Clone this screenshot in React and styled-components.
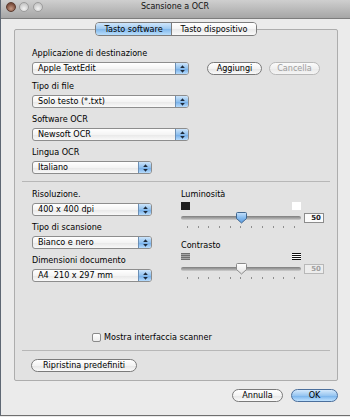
import React from 'react';
import styled, { createGlobalStyle } from 'styled-components';

const GlobalStyle = createGlobalStyle`
  html, body { margin: 0; padding: 0; background: #e9e9e9; }
  body {
    font-family: "DejaVu Sans", "Lucida Grande", sans-serif;
    font-size: 8.1px;
    color: #000;
  }
`;

const Window = styled.div`
  width: 350px;
  height: 416px;
  box-sizing: border-box;
  display: flex;
  flex-direction: column;
  background: #ebebeb;
  border-left: 1px solid #5f6874;
  border-bottom: 1px solid #6e6e6e;
  overflow: hidden;
`;

const TitleBar = styled.div`
  flex: none;
  height: 19px;
  display: grid;
  grid-template-columns: 1fr auto 1fr;
  align-items: start;
  padding: 2px 6px 0 5px;
  box-sizing: border-box;
  background: linear-gradient(#cfcfcf, #a6a6a6);
  border-bottom: 1px solid #7d7d7d;
`;

const Lights = styled.div`
  display: flex;
  gap: 3.3px;
`;

const Light = styled.span`
  width: 10px;
  height: 10px;
  border-radius: 50%;
  box-sizing: border-box;
  border: 1px solid ${p => (p.$close ? '#5a3a2e' : '#9c9c9c')};
  background: ${p =>
    p.$close
      ? 'radial-gradient(circle at 50% 70%, #c79a84, #7a4c3c 70%)'
      : 'radial-gradient(circle at 50% 70%, #f2f2f2, #c6c6c6 75%)'};
`;

const Title = styled.div`
  line-height: 10px;
  font-size: 8px;
  color: #111;
`;

const Body = styled.div`
  flex: 1;
  display: flex;
  flex-direction: column;
  padding: 3px 12px 0 13px;
`;

const TabRow = styled.div`
  display: flex;
  justify-content: center;
  position: relative;
  z-index: 1;
  margin-bottom: -7px;
`;

const Segments = styled.div`
  display: flex;
  height: 14px;
  box-sizing: border-box;
  border: 1px solid #7c7c7c;
  border-radius: 4px;
  overflow: hidden;
`;

const Segment = styled.div`
  width: ${p => p.$w}px;
  display: flex;
  align-items: center;
  justify-content: center;
  line-height: 12px;
  background: ${p =>
    p.$active
      ? 'linear-gradient(#cfe6fb, #9cc8f0 50%, #7fb6ea 51%, #b9defc)'
      : 'linear-gradient(#ffffff, #f4f4f4 50%, #e8e8e8 51%, #fafafa)'};
  & + & { border-left: 1px solid #7c7c7c; }
`;

const GroupBox = styled.div`
  height: 352px;
  box-sizing: border-box;
  display: flex;
  flex-direction: column;
  padding: 18px 7px 8px 7px;
  background: #e2e2e2;
  border: 1px solid #adadad;
  border-radius: 2px;
`;

const TopSection = styled.div`
  display: flex;
  flex-direction: column;
  gap: 6px;
  padding-left: 10px;
`;

const Field = styled.div`
  display: flex;
  flex-direction: column;
  gap: 3px;
`;

const Label = styled.div`
  line-height: 11px;
  height: 11px;
  white-space: nowrap;
  margin-top: ${p => p.$top || 0}px;
`;

const Inline = styled.div`
  display: flex;
  align-items: center;
  gap: ${p => p.$gap || 0}px;
`;

const PopupBox = styled.div`
  width: ${p => p.$w}px;
  height: 13px;
  box-sizing: border-box;
  display: flex;
  align-items: stretch;
  border: 1px solid #8d8d8d;
  border-radius: 3px;
  overflow: hidden;
  background: linear-gradient(#ffffff, #f4f4f4 50%, #e7e7e7 51%, #f9f9f9);
`;

const PopupText = styled.span`
  flex: 1;
  padding-left: 5px;
  line-height: 11px;
  white-space: pre;
`;

const PopupArrows = styled.span`
  width: 12px;
  display: flex;
  align-items: center;
  justify-content: center;
  border-left: 1px solid #6b8fb5;
  background: linear-gradient(#cde5fb, #8fc0ee 50%, #6faae6 51%, #b7dcfd);
`;

const Popup = ({ w, children }) => (
  <PopupBox $w={w}>
    <PopupText>{children}</PopupText>
    <PopupArrows>
      <svg width="5" height="8" viewBox="0 0 5 8">
        <polygon points="2.5,0.3 4.8,3 0.2,3" fill="#1d2a3a" />
        <polygon points="0.2,5 4.8,5 2.5,7.7" fill="#1d2a3a" />
      </svg>
    </PopupArrows>
  </PopupBox>
);

const Button = styled.div`
  width: ${p => p.$w}px;
  height: 13px;
  box-sizing: border-box;
  display: flex;
  align-items: center;
  justify-content: center;
  line-height: 11px;
  border-radius: 7px;
  border: 1px solid ${p => (p.$default ? '#4b6f9c' : p.$disabled ? '#b9b9b9' : '#7a7a7a')};
  color: ${p => (p.$disabled ? '#9c9c9c' : '#000')};
  background: ${p =>
    p.$default
      ? 'linear-gradient(#d4e9fc, #98c6f1 50%, #74b0ea 51%, #bfe2ff)'
      : p.$disabled
      ? 'linear-gradient(#fbfbfb, #f0f0f0 50%, #e9e9e9 51%, #f5f5f5)'
      : 'linear-gradient(#ffffff, #f3f3f3 50%, #e5e5e5 51%, #fafafa)'};
`;

const Separator = styled.div`
  height: 1px;
  flex: none;
  background: #b7b7b7;
  margin-top: ${p => p.$top || 0}px;
`;

const LowerSection = styled.div`
  display: grid;
  grid-template-columns: 120px 143px;
  column-gap: 29px;
  padding-left: 10px;
  margin-top: 7px;
`;

const Column = styled.div`
  display: flex;
  flex-direction: column;
  gap: ${p => p.$gap || 0}px;
`;

const IconRow = styled.div`
  width: 120px;
  display: flex;
  justify-content: space-between;
  margin-top: 2px;
  height: ${p => p.$h}px;
`;

const Swatch = styled.span`
  width: 9px;
  height: 8px;
  background: ${p => p.$c};
`;

const SliderRow = styled.div`
  display: flex;
  align-items: center;
  gap: 3px;
  height: 10px;
  margin-top: ${p => p.$top}px;
`;

const SliderBox = styled.div`
  position: relative;
  width: 120px;
  height: 10px;
  display: flex;
  align-items: center;
`;

const Track = styled.div`
  width: 100%;
  height: 4px;
  border-radius: 2px;
  background: linear-gradient(#7d7d7d, #a9a9a9 60%, #d0d0d0);
`;

const Knob = styled.svg`
  position: absolute;
  left: 55px;
  top: -1px;
`;

const ValueBox = styled.div`
  width: 20px;
  height: 10px;
  box-sizing: border-box;
  border: 1px solid ${p => (p.$disabled ? '#b8b8b8' : '#8c8c8c')};
  background: ${p => (p.$disabled ? '#ededed' : '#fbfbfb')};
  color: ${p => (p.$disabled ? '#a0a0a0' : '#222')};
  font-size: 7px;
  font-weight: bold;
  line-height: 8px;
  text-align: right;
  padding-right: 2px;
`;

const Ticks = styled.div`
  width: 120px;
  box-sizing: border-box;
  display: flex;
  justify-content: space-between;
  padding: 0 6px;
  margin-top: 3px;
`;

const Tick = styled.span`
  width: 1px;
  height: 2px;
  background: #8e8e8e;
`;

const Spacer = styled.div`
  flex: 1;
`;

const CheckRow = styled.div`
  display: flex;
  align-items: center;
  gap: 3px;
  padding-left: 70px;
  margin-bottom: 7px;
  line-height: 11px;
`;

const CheckBox = styled.span`
  width: 9px;
  height: 9px;
  box-sizing: border-box;
  border: 1px solid #8a8a8a;
  border-radius: 2px;
  background: linear-gradient(#ffffff, #ededed);
`;

const ResetRow = styled.div`
  display: flex;
  padding-left: 9px;
  margin-top: 8px;
`;

const Footer = styled.div`
  display: flex;
  justify-content: flex-end;
  gap: 8px;
  margin-top: 8px;
`;

const Slider = ({ active }) => (
  <SliderBox>
    <Track />
    <Knob width="11" height="12" viewBox="0 0 11 12">
      <defs>
        <linearGradient id={active ? 'kb' : 'kw'} x1="0" y1="0" x2="0" y2="1">
          <stop offset="0" stopColor={active ? '#c6e1fb' : '#ffffff'} />
          <stop offset="0.5" stopColor={active ? '#86bbee' : '#f1f1f1'} />
          <stop offset="1" stopColor={active ? '#5b9be0' : '#dcdcdc'} />
        </linearGradient>
      </defs>
      <path
        d="M1.5 0.5 H9.5 A1 1 0 0 1 10.5 1.5 V6.5 L5.5 11 L0.5 6.5 V1.5 A1 1 0 0 1 1.5 0.5 Z"
        fill={`url(#${active ? 'kb' : 'kw'})`}
        stroke={active ? '#41678f' : '#8a8a8a'}
        strokeWidth="1"
      />
    </Knob>
  </SliderBox>
);

const TickRow = () => (
  <Ticks>
    {Array.from({ length: 11 }).map((_, i) => (
      <Tick key={i} />
    ))}
  </Ticks>
);

const Stripes = ({ fg, bg }) => (
  <svg width="9" height="7" viewBox="0 0 9 7">
    <rect x="0" y="0" width="9" height="7" fill={bg} />
    <rect x="0" y="0" width="9" height="1" fill={fg} />
    <rect x="0" y="2" width="9" height="1" fill={fg} />
    <rect x="0" y="4" width="9" height="1" fill={fg} />
    <rect x="0" y="6" width="9" height="1" fill={fg} />
  </svg>
);

export default function App() {
  return (
    <>
      <GlobalStyle />
      <Window>
        <TitleBar>
          <Lights>
            <Light $close />
            <Light />
            <Light />
          </Lights>
          <Title>Scansione a OCR</Title>
          <span />
        </TitleBar>
        <Body>
          <TabRow>
            <Segments>
              <Segment $w={75} $active>Tasto software</Segment>
              <Segment $w={84}>Tasto dispositivo</Segment>
            </Segments>
          </TabRow>
          <GroupBox>
            <TopSection>
              <Field>
                <Label>Applicazione di destinazione</Label>
                <Inline $gap={18}>
                  <Popup w={157}>Apple TextEdit</Popup>
                  <Inline $gap={7}>
                    <Button $w={55}>Aggiungi</Button>
                    <Button $w={51} $disabled>Cancella</Button>
                  </Inline>
                </Inline>
              </Field>
              <Field>
                <Label>Tipo di file</Label>
                <Popup w={157}>Solo testo (*.txt)</Popup>
              </Field>
              <Field>
                <Label>Software OCR</Label>
                <Popup w={157}>Newsoft OCR</Popup>
              </Field>
              <Field>
                <Label>Lingua OCR</Label>
                <Popup w={120}>Italiano</Popup>
              </Field>
            </TopSection>
            <Separator $top={7} />
            <LowerSection>
              <Column $gap={6}>
                <Field>
                  <Label>Risoluzione.</Label>
                  <Popup w={120}>400 x 400 dpi</Popup>
                </Field>
                <Field>
                  <Label>Tipo di scansione</Label>
                  <Popup w={120}>Bianco e nero</Popup>
                </Field>
                <Field>
                  <Label>Dimensioni documento</Label>
                  <Popup w={120}>A4  210 x 297 mm</Popup>
                </Field>
              </Column>
              <Column>
                <Label>Luminosità</Label>
                <IconRow $h={8}>
                  <Swatch $c="#1e1e1e" />
                  <Swatch $c="#ffffff" />
                </IconRow>
                <SliderRow $top={3}>
                  <Slider active />
                  <ValueBox>50</ValueBox>
                </SliderRow>
                <TickRow />
                <Label $top={12}>Contrasto</Label>
                <IconRow $h={7}>
                  <Stripes fg="#6e6e6e" bg="#a4a4a4" />
                  <Stripes fg="#111111" bg="#ffffff" />
                </IconRow>
                <SliderRow $top={4}>
                  <Slider />
                  <ValueBox $disabled>50</ValueBox>
                </SliderRow>
                <TickRow />
              </Column>
            </LowerSection>
            <Spacer />
            <CheckRow>
              <CheckBox />
              <span>Mostra interfaccia scanner</span>
            </CheckRow>
            <Separator />
            <ResetRow>
              <Button $w={106}>Ripristina predefiniti</Button>
            </ResetRow>
          </GroupBox>
          <Footer>
            <Button $w={51}>Annulla</Button>
            <Button $w={47} $default>OK</Button>
          </Footer>
        </Body>
      </Window>
    </>
  );
}
